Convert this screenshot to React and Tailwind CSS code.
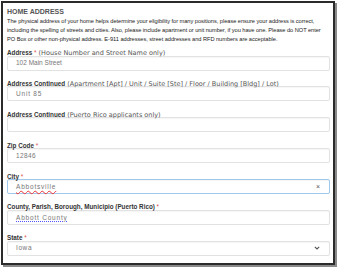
import React from 'react';

const Label = ({ title, note, required, first }) => (
  <div className={`h-[10.5px] leading-[10.5px] whitespace-nowrap ${first ? '' : 'mt-[5.4px]'}`}>
    <span className="text-[6.3px] font-bold text-[#333]">{title}</span>
    {required && <span className="text-[6.3px] text-[#d9534f]"> *</span>}
    {note && (
      <span className="text-[6.5px] text-[#555]" style={{ fontFamily: '"DejaVu Sans", Verdana, sans-serif' }}>
        {' '}
        {note}
      </span>
    )}
  </div>
);

const Field = ({ value, focused, children, deco, tracking }) => (
  <div
    className={`h-[15px] flex items-center justify-between rounded-[2px] border pl-[8px] pr-[9px] shadow-[inset_0_1px_1px_rgba(0,0,0,0.04)] ${
      focused ? 'border-[#9fc8ec]' : 'border-[#e2e2e2]'
    }`}
  >
    <span className={`text-[6.5px] text-[#777] ${tracking || ''} ${deco || ''}`}>{value}</span>
    {children}
  </div>
);

export default function App() {
  return (
    <div className="w-[340px] h-[271px] bg-white pl-[1px] pt-[1px]" style={{ fontFamily: '"Liberation Sans", Arial, sans-serif' }}>
      <div className="w-[334px] h-[264px] border-2 border-[#2b2b2b] shadow-[2px_2px_0_#8a8a8a] pl-[4px] pr-[3px] pt-[3px]">
        <div className="text-[7px] leading-[11px] font-bold text-[#555] uppercase">Home Address</div>
        <p className="text-[5.7px] leading-[9px] text-[#222] tracking-[-0.05px] whitespace-nowrap">
          The physical address of your home helps determine your eligibility for many positions, please ensure your address is correct,
          <br />
          including the spelling of streets and cities. Also, please include apartment or unit number, if you have one. Please do NOT enter
          <br />
          PO Box or other non-physical address. E-911 addresses, street addresses and RFD numbers are acceptable.
        </p>
        <div className="mt-[1px]">
          <Label first title="Address" required note="(House Number and Street Name only)" />
          <Field value="102 Main Street" />
          <Label title="Address Continued" note="(Apartment [Apt] / Unit / Suite [Ste] / Floor / Building [Bldg] / Lot)" />
          <Field value="Unit 85" tracking="tracking-[0.8px]" />
          <Label title="Address Continued" note="(Puerto Rico applicants only)" />
          <Field value="" />
          <Label title="Zip Code" required />
          <Field value="12846" tracking="tracking-[0.4px]" />
          <Label title="City" required />
          <Field value="Abbotsville" focused tracking="tracking-[0.8px]" deco="underline decoration-wavy decoration-[#e33] decoration-[0.6px] underline-offset-[1px]">
            <span className="text-[7px] text-[#555] leading-none">×</span>
          </Field>
          <Label title="County, Parish, Borough, Municipio (Puerto Rico)" required />
          <Field value="Abbott County" tracking="tracking-[0.8px]" deco="underline decoration-dotted decoration-[#55f] decoration-[0.6px] underline-offset-[1px]" />
          <Label title="State" required />
          <Field value="Iowa" tracking="tracking-[0.6px]">
            <svg width="6" height="4" viewBox="0 0 6 4" className="text-[#555]">
              <path d="M0.8 0.8 L3 3 L5.2 0.8" fill="none" stroke="currentColor" strokeWidth="1.1" />
            </svg>
          </Field>
        </div>
      </div>
    </div>
  );
}
